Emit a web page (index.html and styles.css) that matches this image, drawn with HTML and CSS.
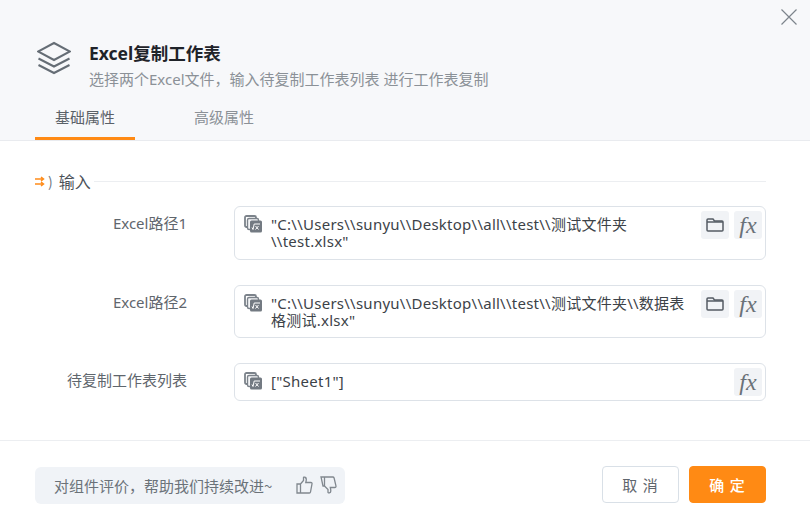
FILE: index.html
```html
<!DOCTYPE html>
<html lang="zh">
<head>
<meta charset="utf-8">
<title>Excel复制工作表</title>
<link rel="stylesheet" href="styles.css">
</head>
<body>
<div class="dialog">
  <header class="head">
    <svg class="close" width="16" height="16" viewBox="0 0 16 16"><path d="M.5.5l15 15M15.500.5l-15 15" stroke="#7d848c" stroke-width="1.200" fill="none"/></svg>
    <div class="title-row">
      <svg class="logo" width="34" height="34" viewBox="0 0 34 34" fill="none" stroke="#656d75" stroke-width="2"><path d="M17 2L33 10.500 17 19 1 10.500Z"/><path d="M1.500 17.500L17 25.500 32.500 17.500"/><path d="M1.500 24L17 32 32.500 24"/></svg>
      <div class="title-text">
        <div class="title">Excel复制工作表</div>
        <div class="subtitle">选择两个Excel文件，输入待复制工作表列表 进行工作表复制</div>
      </div>
    </div>
    <nav class="tabs">
      <div class="tab active">基础属性</div>
      <div class="tab">高级属性</div>
    </nav>
  </header>
  <main class="body">
    <div class="section">
      <svg class="sec-icon" width="11" height="11" viewBox="0 0 11 11" fill="none" stroke="#ff8c1a" stroke-width="1.500"><path d="M0 3h8M6 1l2.500 2L6 5M0 8h8M6 6l2.500 2L6 10"/></svg>
      <span class="sec-paren">)</span>
      <span class="sec-name">输入</span>
      <span class="sec-line"></span>
    </div>
    <div class="row">
      <label class="label">Excel路径1</label>
      <div class="field tall">
        <svg class="var-icon" width="18" height="18" viewBox="0 0 18 18"><rect x="1" y="1" width="11" height="11" rx="1.500" fill="none" stroke="#7c838b" stroke-width="1.800"/><rect x="3.500" y="3.500" width="11" height="11" rx="1.500" fill="#f4f5f7" stroke="#7c838b" stroke-width="1.400"/><rect x="6" y="5.500" width="12" height="12" rx="1.500" fill="#737a82"/><path d="M8 12.500l1 2 1.200-5.500H16M11.500 11l3 3.500M14.500 11l-3 3.500" stroke="#fff" stroke-width="1" fill="none"/></svg>
        <div class="value">"C:\\Users\\sunyu\\Desktop\\all\\test\\测试文件夹\\test.xlsx"</div>
        <button class="tool"><svg width="18" height="16" viewBox="0 0 18 16" fill="none" stroke="#555c64" stroke-width="1.500"><path d="M1 3a1 1 0 0 1 1-1h5l1.500 2H16a1 1 0 0 1 1 1v8a1 1 0 0 1-1 1H2a1 1 0 0 1-1-1z"/><path d="M1 5h16"/></svg></button>
        <button class="tool fx">fx</button>
      </div>
    </div>
    <div class="row">
      <label class="label">Excel路径2</label>
      <div class="field tall">
        <svg class="var-icon" width="18" height="18" viewBox="0 0 18 18"><rect x="1" y="1" width="11" height="11" rx="1.500" fill="none" stroke="#7c838b" stroke-width="1.800"/><rect x="3.500" y="3.500" width="11" height="11" rx="1.500" fill="#f4f5f7" stroke="#7c838b" stroke-width="1.400"/><rect x="6" y="5.500" width="12" height="12" rx="1.500" fill="#737a82"/><path d="M8 12.500l1 2 1.200-5.500H16M11.500 11l3 3.500M14.500 11l-3 3.500" stroke="#fff" stroke-width="1" fill="none"/></svg>
        <div class="value">"C:\\Users\\sunyu\\Desktop\\all\\test\\测试文件夹\\数据表格测试.xlsx"</div>
        <button class="tool"><svg width="18" height="16" viewBox="0 0 18 16" fill="none" stroke="#555c64" stroke-width="1.500"><path d="M1 3a1 1 0 0 1 1-1h5l1.500 2H16a1 1 0 0 1 1 1v8a1 1 0 0 1-1 1H2a1 1 0 0 1-1-1z"/><path d="M1 5h16"/></svg></button>
        <button class="tool fx">fx</button>
      </div>
    </div>
    <div class="row">
      <label class="label">待复制工作表列表</label>
      <div class="field short">
        <svg class="var-icon" width="18" height="18" viewBox="0 0 18 18"><rect x="1" y="1" width="11" height="11" rx="1.500" fill="none" stroke="#7c838b" stroke-width="1.800"/><rect x="3.500" y="3.500" width="11" height="11" rx="1.500" fill="#f4f5f7" stroke="#7c838b" stroke-width="1.400"/><rect x="6" y="5.500" width="12" height="12" rx="1.500" fill="#737a82"/><path d="M8 12.500l1 2 1.200-5.500H16M11.500 11l3 3.500M14.500 11l-3 3.500" stroke="#fff" stroke-width="1" fill="none"/></svg>
        <div class="value">["Sheet1"]</div>
        <button class="tool fx">fx</button>
      </div>
    </div>
  </main>
  <footer class="foot">
    <div class="rate">
      <span class="rate-text">对组件评价，帮助我们持续改进~</span>
      <svg class="thumb" width="17" height="18" viewBox="0 0 17 18" fill="none" stroke="#81888f" stroke-width="1.300"><path d="M1 8h3.500v9H1zM4.500 8l3-3.500V1.500c0-.6 2.800-.8 2.800 1.500 0 1.500-.5 3.500-.5 3.500h5c1 0 1.400.7 1.200 1.500l-1.500 8c-.1.600-.6 1-1.200 1h-8.800"/></svg>
      <svg class="thumb down" width="17" height="18" viewBox="0 0 17 18" fill="none" stroke="#81888f" stroke-width="1.300"><path d="M1 1h3.500v9H3zM4.500 1h8.300c.7 0 1.100.4 1.300 1l1.900 8c.1.800-.3 1.500-1.200 1.500h-4.500s.5 2 .5 3.500c0 2.300-2.800 2.100-2.800 1.500v-3L4.500 10"/></svg>
    </div>
    <div class="actions">
      <button class="btn">取 消</button>
      <button class="btn primary">确 定</button>
    </div>
  </footer>
</div>
</body>
</html>
```
FILE: styles.css
```css
* { box-sizing: border-box; }
html, body { margin: 0; padding: 0; }
body {
  width: 810px;
  height: 522px;
  overflow: hidden;
  background: #fff;
  font-family: "Noto Sans CJK SC", "Noto Sans", sans-serif;
  color: #3c4248;
}
.dialog { display: flex; flex-direction: column; height: 522px; }
.head {
  position: relative;
  height: 141px;
  background: #f7f8fa;
  border-bottom: 1px solid #e9ebef;
  padding: 41px 0 0 35px;
}
.close { position: absolute; top: 9px; right: 13px; }
.title-row { display: flex; align-items: flex-start; gap: 18px; height: 50px; }
.logo { margin-left: 2px; flex: none; }
.title { font-size: 17.500px; font-weight: 700; line-height: 24px; color: #1f2329; font-family: "Noto Sans", "Noto Sans CJK SC", sans-serif; }
.subtitle { font-size: 15px; line-height: 20px; color: #8b9197; margin-top: 4px; font-family: "Noto Sans", "Noto Sans CJK SC", sans-serif; }
.tabs { display: flex; margin-top: 6px; }
.tab {
  width: 100px;
  height: 43px;
  margin-right: 40px;
  text-align: center;
  font-size: 15px;
  line-height: 40px;
  color: #8b9197;
}
.tab + .tab { margin-left: -1px; }
.tab.active { color: #5a6168; border-bottom: 3px solid #ff8a14; }
.body { flex: 1; padding: 30px 44px 0 35px; }
.section { display: flex; align-items: center; height: 20px; margin-bottom: 15px; }
.sec-icon { margin-right: 2px; }
.sec-paren { font-size: 14px; color: #6f767d; margin-right: 6px; }
.sec-name { font-size: 16px; color: #4c5259; margin-right: 3px; }
.sec-line { flex: 1; height: 1px; background: #eceef1; }
.row { display: grid; grid-template-columns: 152px 532px; column-gap: 47px; margin-bottom: 25px; }
.label { text-align: right; font-size: 15px; line-height: 20px; color: #5f666d; padding-top: 7px; font-family: "Noto Sans", "Noto Sans CJK SC", sans-serif; }
.field {
  display: flex;
  align-items: flex-start;
  border: 1px solid #dde2e8;
  border-radius: 6px;
  padding: 4px 3px 0 9px;
  background: #fff;
}
.field.tall { height: 53.500px; }
.field.short { height: 38px; }
.var-icon { flex: none; margin: 4px 9px 0 0; }
.value {
  flex: 1;
  font-size: 15px;
  line-height: 17px;
  letter-spacing: .25px;
  padding-top: 5px;
  padding-right: 6px;
  color: #3c4248;
  font-family: "Noto Sans", "Noto Sans CJK SC", sans-serif;
}
.tool {
  width: 28px;
  height: 28px;
  margin-left: 5px;
  flex: none;
  display: flex;
  align-items: center;
  justify-content: center;
  border: 0;
  padding: 0;
  border-radius: 3px;
  background: #f1f3f6;
}
.fx { font-family: "Liberation Serif", serif; font-style: italic; font-size: 24px; line-height: 26px; color: #6a7178; letter-spacing: 0; }
.foot {
  height: 82px;
  border-top: 1px solid #eceef1;
  display: flex;
  align-items: center;
  justify-content: space-between;
  padding: 0 44px 0 35px;
}
.rate {
  display: flex;
  align-items: center;
  width: 310px;
  height: 37px;
  margin-top: 7px;
  padding-left: 19px;
  border-radius: 6px;
  background: #f0f3f7;
}
.rate-text { font-size: 15px; color: #6b7279; width: 242px; white-space: nowrap; }
.thumb { margin-right: 7px; flex: none; }
.actions { display: flex; gap: 10px; margin-top: 5px; }
.btn {
  width: 77px;
  height: 37px;
  border: 1px solid #d9e0e7;
  border-radius: 4px;
  background: #fff;
  color: #5f666d;
  font-family: "Noto Sans CJK SC", sans-serif;
  font-size: 15px;
  letter-spacing: 1px;
}
.btn.primary { background: #ff8a14; border-color: #ff8a14; color: #fff; font-weight: 500; }
```
